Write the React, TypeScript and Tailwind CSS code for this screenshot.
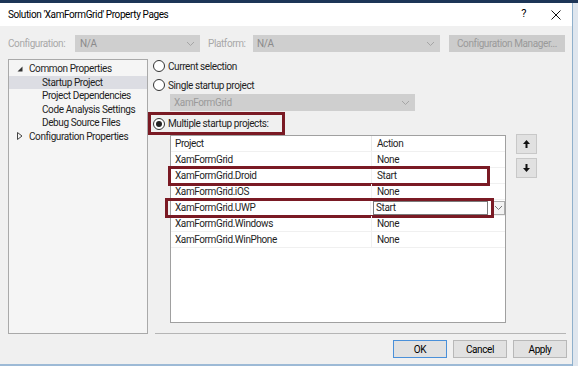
import React from "react";

const font = { fontFamily: 'Roboto, "Noto Sans", sans-serif', letterSpacing: "-0.4px" };

function Radio({ checked }: { checked?: boolean }) {
  return (
    <span className="w-[12px] h-[12px] rounded-full border border-[#333] bg-white flex items-center justify-center shrink-0">
      {checked && <span className="w-[6px] h-[6px] rounded-full bg-[#222]" />}
    </span>
  );
}

function Chevron({ color = "#b0b0b0" }: { color?: string }) {
  return (
    <svg width="9" height="6" viewBox="0 0 9 6">
      <path d="M1 1 L4.5 4.5 L8 1" fill="none" stroke={color} strokeWidth="1" />
    </svg>
  );
}

const rows = [
  { p: "XamFormGrid", a: "None" },
  { p: "XamFormGrid.Droid", a: "Start", box: "droid" },
  { p: "XamFormGrid.iOS", a: "None" },
  { p: "XamFormGrid.UWP", a: "Start", box: "uwp" },
  { p: "XamFormGrid.Windows", a: "None" },
  { p: "XamFormGrid.WinPhone", a: "None" },
];

export default function App() {
  return (
    <div className="w-[578px] h-[366px] overflow-hidden flex flex-col bg-[#c9d8e6] text-[10px] text-[#1e1e1e] whitespace-nowrap" style={font}>
      <div className="h-[3px] bg-[#1d3557] shrink-0" />
      <div className="flex flex-1 min-h-0">
        <div className="w-[573px] flex flex-col bg-[#f0f0f0] border-r border-[#8fb0cc]">
          {/* title bar */}
          <div className="h-[23px] bg-white flex items-center pl-[8px] shrink-0">
            <span className="text-[10px] text-black">Solution 'XamFormGrid' Property Pages</span>
            <span className="ml-auto mr-[25px] text-[11px] text-black">?</span>
            <svg width="10" height="10" viewBox="0 0 10 10" className="mr-[11px]">
              <path d="M0.5 0.5 L9.5 9.5 M9.5 0.5 L0.5 9.5" stroke="#111" strokeWidth="1" />
            </svg>
          </div>
          {/* config row */}
          <div className="flex items-center h-[17px] mt-[9px] pl-[8px] shrink-0 text-[#a8a8a8]">
            <span className="w-[67px]">Configuration:</span>
            <div className="w-[125px] h-[17px] bg-[#cfcfcf] flex items-center pl-[5px] pr-[5px] text-[#8a8a8a]">
              <span>N/A</span>
              <span className="ml-auto"><Chevron color="#a5a5a5" /></span>
            </div>
            <span className="ml-[8px] w-[45px]">Platform:</span>
            <div className="w-[187px] h-[17px] bg-[#cfcfcf] flex items-center pl-[4px] pr-[5px] text-[#8a8a8a]">
              <span>N/A</span>
              <span className="ml-auto"><Chevron color="#a5a5a5" /></span>
            </div>
            <div className="ml-[9px] w-[116px] h-[17px] bg-[#cccccc] flex items-center justify-center text-[#9a9a9a]">
              Configuration Manager...
            </div>
          </div>
          {/* main */}
          <div className="flex mt-[7px] pl-[8px] shrink-0">
            {/* tree */}
            <div className="w-[140px] h-[275px] border border-[#a9a9a9] bg-[#f5f5f5] pt-[2px] shrink-0">
              <div className="h-[13.5px] flex items-center pl-[8px]">
                <svg width="6" height="6" viewBox="0 0 6 6" className="mr-[6px]"><path d="M5.5 0.5 L5.5 5.5 L0.5 5.5 Z" fill="#333" /></svg>
                <span>Common Properties</span>
              </div>
              <div className="h-[13.5px] flex items-center pl-[33px] bg-[#dcdde3]">Startup Project</div>
              <div className="h-[13.5px] flex items-center pl-[33px]">Project Dependencies</div>
              <div className="h-[13.5px] flex items-center pl-[33px]">Code Analysis Settings</div>
              <div className="h-[13.5px] flex items-center pl-[33px]">Debug Source Files</div>
              <div className="h-[13.5px] flex items-center pl-[8px]">
                <svg width="6" height="8" viewBox="0 0 6 8" className="mr-[6px]"><path d="M0.5 0.5 L5 4 L0.5 7.5 Z" fill="none" stroke="#444" strokeWidth="1" /></svg>
                <span>Configuration Properties</span>
              </div>
            </div>
            {/* right */}
            <div className="ml-[7px] w-[411px] h-[275px] border-b border-[#b5b5b5] flex flex-col">
              <div className="flex items-center gap-[3px] mt-[1px] ml-[-2px] h-[12px]">
                <Radio /><span>Current selection</span>
              </div>
              <div className="flex items-center gap-[3px] mt-[7px] ml-[-2px] h-[12px]">
                <Radio /><span>Single startup project</span>
              </div>
              <div className="ml-[15px] mt-[3px] w-[245px] h-[17px] bg-[#cfcfcf] flex items-center pl-[4px] pr-[5px] text-[#9a9a9a]">
                <span>XamFormGrid</span>
                <span className="ml-auto"><Chevron color="#a5a5a5" /></span>
              </div>
              <div className="mt-[1px] ml-[-7px] w-[137px] h-[23px] border-[3px] border-[#7a1a24] flex items-center gap-[3px] pl-[2px]">
                <Radio checked /><span>Multiple startup projects:</span>
              </div>
              <div className="flex">
                <div className="ml-[15px] w-[336px] h-[188px] border border-[#a0a0a0] bg-white flex flex-col">
                  <div className="h-[16px] flex items-center border-b border-[#f0f0f0]">
                    <span className="w-[201px] pl-[4px] border-r border-[#e8e8e8] h-full flex items-center">Project</span>
                    <span className="pl-[5px]">Action</span>
                  </div>
                  {rows.map((r) => (
                    <div key={r.p} className="h-[16px] flex items-center border-b border-[#f0f0f0] relative">
                      <span className="w-[201px] pl-[4px] h-full flex items-center border-r border-[#f0f0f0]">{r.p}</span>
                      {r.box === "uwp" ? (
                        <div className="flex items-center h-full">
                          <span className="ml-[2px] w-[115px] h-[14px] border border-[#7a7a7a] flex items-center pl-[2px]">{r.a}</span>
                          <span className="ml-[3px] w-[14px] h-[14px] border border-[#adadad] bg-[#f3f3f3] flex items-center justify-center"><Chevron color="#777" /></span>
                        </div>
                      ) : (
                        <span className="pl-[5px]">{r.a}</span>
                      )}
                      {r.box === "droid" && (
                        <div className="absolute left-[-3px] top-[-2px] w-[322px] h-[20px] border-[3px] border-[#7a1a24]" />
                      )}
                      {r.box === "uwp" && (
                        <div className="absolute left-[-6px] top-[-2px] w-[329px] h-[20px] border-[3px] border-[#7a1a24]" />
                      )}
                    </div>
                  ))}
                </div>
                <div className="ml-[10px] mt-[-1px] flex flex-col gap-[4px]">
                  <div className="w-[21px] h-[20px] bg-[#e1e1e1] border border-[#c8c8c8] flex items-center justify-center">
                    <svg width="7" height="8" viewBox="0 0 7 8"><path d="M3.5 0 L7 4 L4.5 4 L4.5 8 L2.5 8 L2.5 4 L0 4 Z" fill="#111" /></svg>
                  </div>
                  <div className="w-[21px] h-[20px] bg-[#e1e1e1] border border-[#c8c8c8] flex items-center justify-center">
                    <svg width="7" height="8" viewBox="0 0 7 8"><path d="M3.5 8 L7 4 L4.5 4 L4.5 0 L2.5 0 L2.5 4 L0 4 Z" fill="#111" /></svg>
                  </div>
                </div>
              </div>
            </div>
          </div>
          {/* buttons */}
          <div className="flex justify-end gap-[6px] mt-[6px] pr-[5px] shrink-0">
            <div className="w-[54px] h-[18px] bg-[#e1e1e1] border border-[#4a90d9] flex items-center justify-center text-black">OK</div>
            <div className="w-[54px] h-[18px] bg-[#e1e1e1] border border-[#b8b8b8] flex items-center justify-center text-black">Cancel</div>
            <div className="w-[54px] h-[18px] bg-[#e1e1e1] border border-[#b8b8b8] flex items-center justify-center text-black">Apply</div>
          </div>
          <div className="flex-1" />
          <div className="h-[2px] bg-[#9dbad6] shrink-0" />
        </div>
        <div className="flex-1 bg-[#dfe6ee]" />
      </div>
    </div>
  );
}
